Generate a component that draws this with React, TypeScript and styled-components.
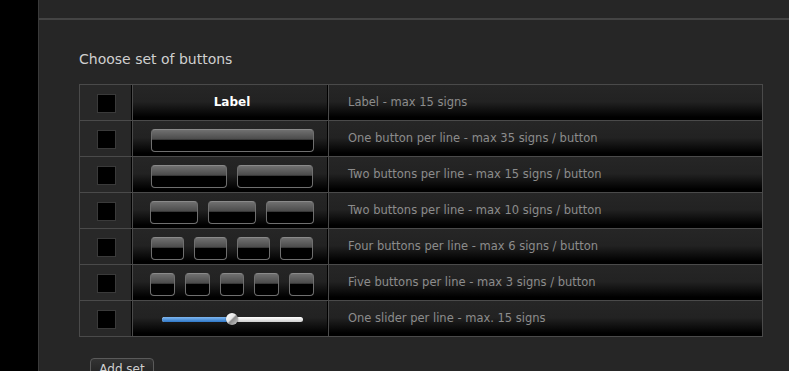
import React from 'react'
import styled, { createGlobalStyle } from 'styled-components'

const GlobalStyle = createGlobalStyle`
  html, body {
    margin: 0;
    padding: 0;
    background: #262626;
    overflow: hidden;
  }
  body {
    font-family: 'DejaVu Sans', Verdana, sans-serif;
  }
  * {
    box-sizing: border-box;
  }
`

const Page = styled.div`
  display: flex;
  min-height: 371px;
`

const Sidebar = styled.div`
  width: 39px;
  background: #000;
  border-right: 1px solid #3a3a3a;
  flex-shrink: 0;
`

const Main = styled.div`
  flex: 1;
  display: flex;
  flex-direction: column;
`

const TopBar = styled.div`
  height: 20px;
  border-bottom: 2px solid #444;
`

const Content = styled.div`
  padding: 31px 0 0 40px;
`

const Heading = styled.h2`
  margin: 0 0 16px;
  font-size: 14px;
  font-weight: normal;
  line-height: 17px;
  color: #d0d0d0;
`

const Table = styled.div`
  width: 684px;
  border: 1px solid #4a4a4a;
`

const Row = styled.div`
  display: grid;
  grid-template-columns: 53px 196px 1fr;
  height: 36px;
  border-top: 1px solid #4a4a4a;
  &:first-child {
    border-top: none;
    height: 35px;
  }
`

const CheckCell = styled.div`
  display: flex;
  align-items: center;
  justify-content: center;
  background: #282828;
  border-right: 1px solid #4a4a4a;
  box-shadow: inset -1px 0 0 #000;
`

const Check = styled.span`
  width: 19px;
  height: 19px;
  margin-top: 1px;
  background: #000;
  border: 1px solid #3a3a3a;
`

const GradCell = styled.div`
  background: linear-gradient(#262626 0%, #222 48%, #000 92%, #000 100%);
`

const PreviewCell = styled(GradCell)`
  display: flex;
  align-items: center;
  justify-content: center;
  gap: 10px;
  padding: 0 14px 0 17px;
  border-right: 1px solid #4a4a4a;
  box-shadow: inset -1px 0 0 #000;
`

const DescCell = styled(GradCell)`
  display: flex;
  align-items: center;
  padding-left: 19px;
  font-size: 11.5px;
  color: #8c8c8c;
  padding-bottom: 1px;
`

const LabelText = styled.span`
  font-weight: bold;
  font-size: 12px;
  color: #fff;
  padding-bottom: 1px;
`

const Btn = styled.span<{ $w: number }>`
  width: ${p => p.$w}px;
  height: 23px;
  margin-top: 3px;
  border: 1px solid #6f6f6f;
  border-top-color: #8a8a8a;
  border-radius: 4px;
  background: linear-gradient(#707070 0%, #4a4a4a 45%, #000 46%, #000 100%);
`

const SliderTrack = styled.div`
  position: relative;
  width: 141px;
  height: 5px;
  margin-top: 1px;
  border-radius: 3px;
  background: linear-gradient(#fff, #cfcfcf);
`

const SliderFill = styled.div`
  height: 100%;
  border-radius: 3px;
  background: linear-gradient(#7fb6ee, #2f78c8);
`

const Knob = styled.span`
  position: absolute;
  top: -4px;
  width: 12px;
  height: 12px;
  margin-left: -6px;
  border-radius: 50%;
  background: linear-gradient(135deg, #fff 0%, #e6e6e6 45%, #8a8a8a 55%, #d0d0d0 100%);
  box-shadow: 0 0 1px #000;
`

const AddButton = styled.button`
  margin: 21px 0 0 11px;
  width: 64px;
  height: 24px;
  padding: 0 0 2px;
  border: 1px solid #5a5a5a;
  border-radius: 4px;
  background: linear-gradient(#333, #1c1c1c);
  color: #cfcfcf;
  font-family: 'DejaVu Sans', Verdana, sans-serif;
  font-size: 12px;
`

const rows: { count: number; width: number; text: string }[] = [
  { count: 1, width: 163, text: 'One button per line - max 35 signs / button' },
  { count: 2, width: 76, text: 'Two buttons per line - max 15 signs / button' },
  { count: 3, width: 48, text: 'Two buttons per line - max 10 signs / button' },
  { count: 4, width: 33, text: 'Four buttons per line - max 6 signs / button' },
  { count: 5, width: 25, text: 'Five buttons per line - max 3 signs / button' },
]

const App = () => {
  const sliderValue = 50
  return (
    <Page>
      <GlobalStyle />
      <Sidebar />
      <Main>
        <TopBar />
        <Content>
          <Heading>Choose set of buttons</Heading>
          <Table>
            <Row>
              <CheckCell><Check /></CheckCell>
              <PreviewCell><LabelText>Label</LabelText></PreviewCell>
              <DescCell>Label - max 15 signs</DescCell>
            </Row>
            {rows.map(r => (
              <Row key={r.text}>
                <CheckCell><Check /></CheckCell>
                <PreviewCell>
                  {Array.from({ length: r.count }).map((_, i) => (
                    <Btn key={i} $w={r.width} />
                  ))}
                </PreviewCell>
                <DescCell>{r.text}</DescCell>
              </Row>
            ))}
            <Row>
              <CheckCell><Check /></CheckCell>
              <PreviewCell>
                <SliderTrack>
                  <SliderFill style={{ width: `${sliderValue}%` }} />
                  <Knob style={{ left: `${sliderValue}%` }} />
                </SliderTrack>
              </PreviewCell>
              <DescCell>One slider per line - max. 15 signs</DescCell>
            </Row>
          </Table>
          <AddButton>Add set</AddButton>
        </Content>
      </Main>
    </Page>
  )
}

export default App
